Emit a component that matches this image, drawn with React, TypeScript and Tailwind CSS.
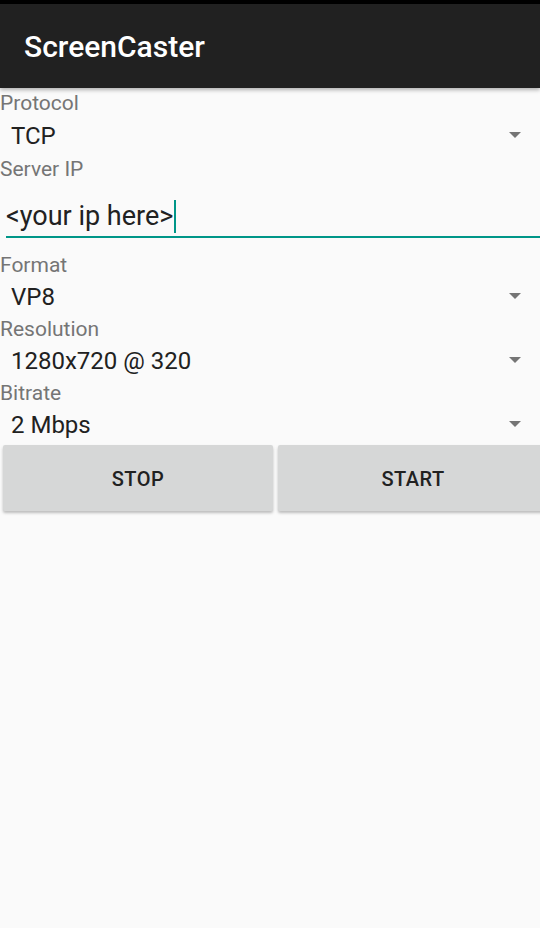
import React from 'react';

const font = { fontFamily: 'Roboto, "Noto Sans", sans-serif' };

const Arrow: React.FC = () => (
    <svg width="12" height="6" viewBox="0 0 12 6" className="shrink-0">
        <path d="M0 0 L12 0 L6 6 Z" fill="#757575" />
    </svg>
);

const Label: React.FC<{ text: string }> = ({ text }) => (
    <div className="h-[26px] leading-[26px] text-[21px] text-[#757575] pl-0">{text}</div>
);

const SpinnerRow: React.FC<{ value: string; tall?: boolean }> = ({ value, tall }) => (
    <div className={`flex items-center justify-between pl-[11px] pr-[19px] ${tall ? 'h-[40px]' : 'h-[38px]'}`}>
        <span className="text-[24px] leading-[28px] text-[#212121]">{value}</span>
        <div className="-mt-[2px]">
            <Arrow />
        </div>
    </div>
);

export default function App() {
    return (
        <div className="w-[540px] h-[928px] bg-[#fafafa] overflow-hidden" style={font}>
            <div className="h-[4px] bg-black" />
            <header className="h-[84px] bg-[#212121] flex items-center pl-6 pt-[2px] shadow-[0_2px_4px_rgba(0,0,0,0.3)] relative">
                <h1 className="text-white text-[30px] font-medium leading-none">ScreenCaster</h1>
            </header>

            <main className="pt-[2px]">
                <Label text="Protocol" />
                <SpinnerRow value="TCP" tall />

                <Label text="Server IP" />
                <div className="h-[70px] pt-[16px] pl-[6px]">
                    <div className="flex items-center h-[36px]">
                        <span className="text-[27px] leading-[36px] text-[#212121]">&lt;your ip here&gt;</span>
                        <span className="w-[2px] h-[33px] bg-[#009688] ml-[1px]" />
                    </div>
                    <div className="mt-[2px] h-[2px] bg-[#009688]" />
                </div>

                <Label text="Format" />
                <SpinnerRow value="VP8" />

                <Label text="Resolution" />
                <SpinnerRow value="1280x720 @ 320" />

                <Label text="Bitrate" />
                <SpinnerRow value="2 Mbps" />

                <div className="flex gap-[5px] pl-[3px] pt-[1px] w-[560px]">
                    {['STOP', 'START'].map((label) => (
                        <button
                            key={label}
                            className="w-[270px] h-[66px] shrink-0 bg-[#d6d7d7] rounded-[2px] shadow-[0_2px_3px_rgba(0,0,0,0.25)] text-[20px] font-medium tracking-[0.5px] text-[#212121] pt-[2px]"
                        >
                            {label}
                        </button>
                    ))}
                </div>
            </main>
        </div>
    );
}
